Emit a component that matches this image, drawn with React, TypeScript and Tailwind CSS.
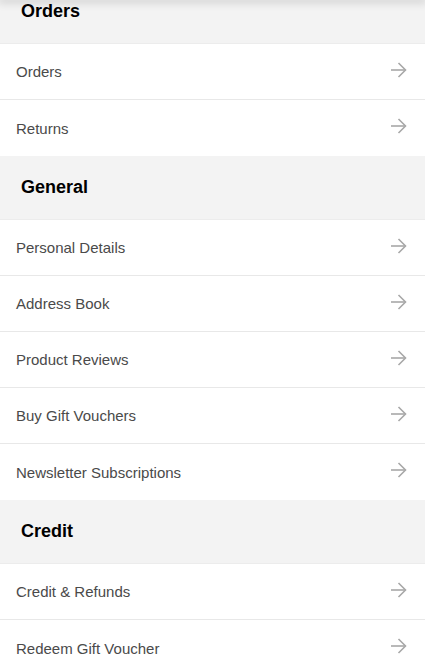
import React from 'react';

const sections: { title: string; items: string[] }[] = [
  { title: 'Orders', items: ['Orders', 'Returns'] },
  {
    title: 'General',
    items: ['Personal Details', 'Address Book', 'Product Reviews', 'Buy Gift Vouchers', 'Newsletter Subscriptions'],
  },
  { title: 'Credit', items: ['Credit & Refunds', 'Redeem Gift Voucher'] },
];

function Arrow() {
  return (
    <svg
      width="17"
      height="16"
      viewBox="0 0 17 16"
      fill="none"
      stroke="#a8a8a8"
      strokeWidth="1.6"
      className="-translate-y-[2px]"
    >
      <path d="M1 8h14.5" />
      <path d="M8.5 1l7 7-7 7" />
    </svg>
  );
}

export default function App() {
  return (
    <div className="relative min-h-screen bg-white font-['Liberation_Sans',Arial,sans-serif] overflow-hidden">
      {/* shadow of the sticky bar above */}
      <div className="fixed top-0 left-0 right-0 h-0 shadow-[0_0_9px_2px_rgba(0,0,0,0.22)] z-10" />
      <div className="-mt-[20px]">
        {sections.map((s) => (
          <div key={s.title}>
            <div className="h-16 bg-[#f3f3f3] flex items-center px-[21px] border-b border-[#ececec]">
              <h2 className="text-[18px] font-bold text-black">{s.title}</h2>
            </div>
            {s.items.map((item, i) => (
              <div
                key={item}
                className={`h-14 flex items-center justify-between pl-4 pr-[18px] ${
                  i < s.items.length - 1 ? 'border-b border-[#e8e8e8]' : ''
                }`}
              >
                <span className="text-[15px] text-[#4a4a4a] pt-[2px]">{item}</span>
                <Arrow />
              </div>
            ))}
          </div>
        ))}
      </div>
    </div>
  );
}
